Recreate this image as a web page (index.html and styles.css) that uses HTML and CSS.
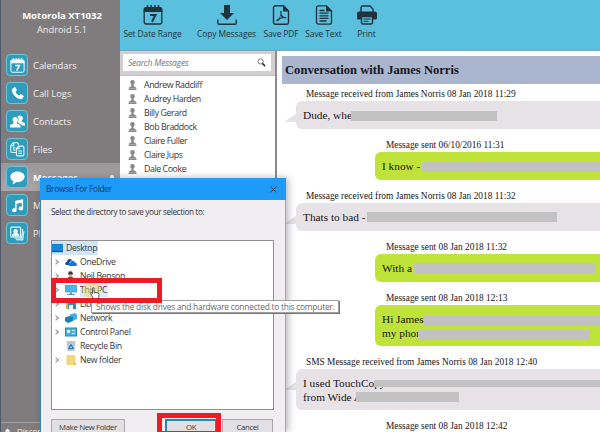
FILE: index.html
```html
<!DOCTYPE html>
<html lang="en">
<head>
<meta charset="utf-8">
<title>Messages</title>
<link rel="stylesheet" href="styles.css">
</head>
<body>
<svg width="0" height="0" class="defs">
  <symbol id="person" viewBox="0 0 10 11"><path d="M5 0C3 0 2.400 1.400 2.500 2.800c.1 1.200.6 2 1.400 2.500 0 1-.2 1.500-.7 1.800L1 8.200V9h8v-.8L6.800 7.100C6.300 6.800 6.100 6.300 6.100 5.300c.8-.5 1.300-1.300 1.400-2.500C7.600 1.400 7 0 5 0zM.6 9.500h8.800V11H.6z"/></symbol>
  <symbol id="cal" viewBox="0 0 20 20"><path d="M3 2h14a2.500 2.500 0 0 1 2.500 2.500V7H.5V4.500A2.500 2.500 0 0 1 3 2z"/><path d="M1.200 6v11a2 2 0 0 0 2 2h13.600a2 2 0 0 0 2-2V6" fill="none" stroke="currentColor" stroke-width="1.300"/><path d="M4.500 0v4M8.200 0v4M11.800 0v4M15.500 0v4" stroke="currentColor" stroke-width="1.500"/><path d="M7 10h5.500L9 16.800" fill="none" stroke="currentColor" stroke-width="2"/></symbol>
</svg>
<div class="app">
  <aside class="side">
    <div class="device"><b>Motorola XT1032</b><span>Android 5.1</span></div>
    <nav>
      <a class="item"><i class="tile"><svg viewBox="0 0 20 20"><use href="#cal"/></svg></i><span>Calendars</span></a>
      <a class="item"><i class="tile"><svg viewBox="0 0 20 20"><path d="M3.500 3.200 6 1.600c.6-.3 1-.2 1.300.3L9 5c.3.6.2 1-.3 1.400L7.200 7.600c.8 2 2.700 4 5 5.100l1.400-1.500c.4-.4.800-.5 1.300-.2l3 1.900c.5.3.6.8.3 1.300l-1.700 2.500c-.5.7-1.200.9-2.200.8C8.500 16.700 3 11 2.500 5.500c-.1-1 .2-1.800 1-2.300z"/></svg></i><span>Call Logs</span></a>
      <a class="item"><i class="tile"><svg viewBox="0 0 20 20"><path d="M13 2c-1.500 0-2.600.8-3 1.800 1.800 1.500 1.800 4.600.5 6.700v1.200l4.300 2c.6.3 1 .8 1.200 1.500H20v-2.500c0-1-4-1.700-4-2.700V8.800C18.500 6 17 2 13 2z"/><path d="M7 4C4 4 3 6.500 3.500 8.800c.2 1 .8 1.700 1.200 2v1.700L.8 14.300c-.6.3-.8.800-.8 1.500V18h14v-2.200c0-.7-.2-1.200-.8-1.500l-3.900-1.800v-1.700c.4-.3 1-1 1.200-2C11 6.500 10 4 7 4z"/></svg></i><span>Contacts</span></a>
      <a class="item"><i class="tile"><svg viewBox="0 0 20 20" class="line"><path d="M8 14H3a2 2 0 0 1-2-2V4.500L4.500 1H9.500A1.500 1.500 0 0 1 11 2.500V4M5 1v4H1M4 7.500h3M4 10.500h3"/><path d="M11.500 5.500h5.500A1.500 1.500 0 0 1 18.500 7v10a1.500 1.500 0 0 1-1.500 1.500h-7A1.500 1.500 0 0 1 8.500 17V8.500zM12 5.500V9H8.500M11 12h5M11 15h5"/></svg></i><span>Files</span></a>
      <a class="item on"><i class="tile"><svg viewBox="0 0 20 20"><path d="M10 2c5.200 0 9.500 3.100 9.500 7.100S15.200 16.200 10 16.200l-1.800-.1C7 17.600 4.800 18.800 3 18.900c1-.9 1.500-2.200 1.500-3.800C2.100 13.800.5 11.600.5 9.100.5 5.100 4.800 2 10 2z"/></svg></i><b>Messages</b><em></em></a>
      <a class="item"><i class="tile"><svg viewBox="0 0 20 20"><path d="M7 3.500 17.500 1.500V14a3 2.500 0 1 1-1.800-2.200V6.300L8.800 7.600v8.600a3 2.500 0 1 1-1.800-2.200z"/></svg></i><span>Music</span></a>
      <a class="item"><i class="tile"><svg viewBox="0 0 20 20" class="line"><rect x="1" y="1.500" width="13" height="13" rx="1"/><path d="M15.500 4.500l1.500.4-1.800 11.300-9.500-.2M18.500 7l-1.600 11.500-9-.3"/><path d="M3.500 12.500c.5-2 2-2 2.700-2.700-1.700-1.800-1.200-5 1.300-5s3 3.200 1.300 5c.7.700 2.200.7 2.700 2.700z" class="solid"/></svg></i><span>Photos</span></a>
    </nav>
    <footer><svg viewBox="0 0 8 8"><path d="M4 0l1 .8C6.500 1.600 6.500 3 6.600 5L8 7H0l1.400-2C1.500 3 1.500 1.600 3 .8z"/></svg><span>Disconnect</span></footer>
  </aside>
  <main>
    <header class="bar">
      <a class="tool t1"><svg viewBox="0 0 20 20"><use href="#cal"/></svg><span>Set Date Range</span></a>
      <a class="tool t2"><svg viewBox="0 0 20 20"><path d="M7 0h6v8h4l-7 7-7-7h4z"/><path d="M.8 14.500V18q0 1.200 1.200 1.200h16q1.200 0 1.200-1.200v-3.500" fill="none" stroke="currentColor" stroke-width="1.400"/></svg><span>Copy Messages</span></a>
      <a class="tool t3"><svg viewBox="0 0 20 20"><path d="M4.500.8h8L17.500 6v11.200a2 2 0 0 1-2 2h-11a2 2 0 0 1-2-2V2.800a2 2 0 0 1 2-2z" fill="none" stroke="currentColor" stroke-width="1.400"/><path d="M12 .5 18 6.500h-6zM9.200 6h1.300l.1 3.200c.7 1.400 1.500 2.200 2.500 2.800l2.200.2v1.200l-2.600-.3-3.200.6-2.800 2.600-1.400-.2.200-1.200 2.700-1.800 1.300-3.400zM9.700 10.700l-.8 2 2.200-.4z" fill-rule="evenodd"/></svg><span>Save PDF</span></a>
      <a class="tool t4"><svg viewBox="0 0 20 20"><path d="M4.500.8h8L17.500 6v11.200a2 2 0 0 1-2 2h-11a2 2 0 0 1-2-2V2.800a2 2 0 0 1 2-2zM5.500 5.500h5M5.500 8.200h9M5.500 10.800h9M5.500 13.400h9M5.500 16h7" fill="none" stroke="currentColor" stroke-width="1.300"/><path d="M12 .5 18 6.500h-6z"/></svg><span>Save Text</span></a>
      <a class="tool t5"><svg viewBox="0 0 20 20"><path d="M4 7V2.500A1.500 1.500 0 0 1 5.500 1H13l3 3v3M4.500 11.500h11v6a1.500 1.500 0 0 1-1.500 1.500H6a1.500 1.500 0 0 1-1.500-1.500z" fill="none" stroke="currentColor" stroke-width="1.400"/><path d="M2 6.500h16a2 2 0 0 1 2 2V13a1.500 1.500 0 0 1-1.500 1.500H16V11H4v3.500H1.500A1.500 1.500 0 0 1 0 13V8.500a2 2 0 0 1 2-2z"/><path d="M6.500 14h7M6.500 16.300h5" stroke="currentColor"/></svg><span>Print</span></a>
    </header>
    <div class="cols">
      <section class="people">
        <div class="search"><div><span>Search Messages</span><svg viewBox="0 0 10 10"><circle cx="4" cy="3.800" r="2.900" fill="none" stroke="#6b666b"/><path d="M6 6l3 3" stroke="#333" stroke-width="1.700"/></svg></div></div>
        <ul>
          <li><svg><use href="#person"/></svg>Andrew Radcliff</li>
          <li><svg><use href="#person"/></svg>Audrey Harden</li>
          <li><svg><use href="#person"/></svg>Billy Gerard</li>
          <li><svg><use href="#person"/></svg>Bob Braddock</li>
          <li><svg><use href="#person"/></svg>Claire Fuller</li>
          <li><svg><use href="#person"/></svg>Claire Jups</li>
          <li><svg><use href="#person"/></svg>Dale Cooke</li>
        </ul>
      </section>
      <section class="chat">
        <h1>Conversation with James Norris</h1>
        <div class="msg in"><p class="meta">Message received from James Norris 08 Jan 2018 11:29</p><div class="bubble"><p>Dude, whe<i class="mask m1"></i></p></div></div>
        <div class="msg out"><p class="meta">Message sent 06/10/2016 11:31</p><div class="bubble"><p>I know - <i class="mask m2"></i></p></div></div>
        <div class="msg in"><p class="meta">Message received from James Norris 08 Jan 2018 11:32</p><div class="bubble"><p>Thats to bad - <i class="mask m3"></i></p></div></div>
        <div class="msg out"><p class="meta">Message sent 08 Jan 2018 11:32</p><div class="bubble"><p>With a<i class="mask m4"></i></p></div></div>
        <div class="msg out"><p class="meta">Message sent 08 Jan 2018 12:13</p><div class="bubble"><p>Hi James<i class="mask m5"></i></p><p>my phon<i class="mask m6"></i></p></div></div>
        <div class="msg in"><p class="meta sms">SMS Message received from James Norris 08 Jan 2018 12:40</p><div class="bubble"><p>I used TouchCopy<i class="mask m7"></i></p><p>from Wide A<i class="mask m8"></i></p></div></div>
        <div class="msg out"><p class="meta">Message sent 08 Jan 2018 12:42</p></div>
      </section>
    </div>
  </main>
</div>

<div class="dialog">
  <div class="title"><span>Browse For Folder</span><svg viewBox="0 0 8 8"><path d="M.7.700l6.600 6.600M7.300.7.700 7.300" stroke="#17385c" stroke-width="1.100"/></svg></div>
  <p class="hint">Select the directory to save your selection to:</p>
  <div class="tree">
    <div class="row root"><svg viewBox="0 0 12 10"><path d="M0 .5h12v9H0z" fill="#1687d9"/><path d="M0 8h12v1.500H0z" fill="#0b5fae"/></svg><span>Desktop</span></div>
    <div class="row"><u></u><svg viewBox="0 0 12 10"><path d="M1 8C-.5 7 .5 4.800 2 4.800 2 2 5.500 1 7 3L4 6v2z" fill="#0b4fa4"/><path d="M4.500 9C2.500 8 3.500 5.500 5.300 5.700 6 3 9.500 3 9.800 5.500 12.500 5.500 12.500 9 10.500 9z" fill="#1479cf"/></svg><span>OneDrive</span></div>
    <div class="row"><u></u><svg viewBox="0 0 12 10"><circle cx="5.500" cy="2.500" r="2.300" fill="#41342e"/><path d="M2 10c0-3 1-4.500 3.500-4.500S9 7 9 10z" fill="#4a5058"/><path d="M4.300 3.200h2.500v2H4.300z" fill="#caa48a"/></svg><span>Neil Benson</span></div>
    <div class="row pc"><u></u><svg viewBox="0 0 12 10"><path d="M0 0h12v7.500H0z" fill="#6b9dba"/><path d="M.8.800h10.400v6H.8z" fill="#46b8ef"/><path d="M2 9h8v1H2zM5 7.500h2V9H5z" fill="#5a93b0"/></svg><span>This PC</span></div>
    <div class="row"><u></u><svg viewBox="0 0 12 10"><path d="M1 4 6 0l5 4v6H8V6H4v4H1z" fill="#2c8abf"/><path d="M1 4h2v6H1z" fill="#e0b84c"/></svg><span>Libraries</span></div>
    <div class="row"><u></u><svg viewBox="0 0 12 10"><path d="M5 1.500 10 0l2 1.500V6l-5 2-2-1z" fill="#42aee6"/><path d="M0 4.500 4.500 3 8 4v4l-5 2-3-2z" fill="#1f7fb5"/></svg><span>Network</span></div>
    <div class="row"><u></u><svg viewBox="0 0 12 10"><path d="M0 .5h12v9H0z" fill="#2a83b6"/><path d="M1 1.500h10v7H1z" fill="#48b3e3"/><path d="M2 3h3v3H2zM7 3h3v1H7zM7 6h3v1H7z" fill="#d7f0fb"/></svg><span>Control Panel</span></div>
    <div class="row"><u class="none"></u><svg viewBox="0 0 12 10"><path d="M1.500 0h9l-1 10h-7z" fill="#b9c6cf"/><path d="M6 2.500 9 8H3z" fill="#2673ae"/><path d="M6 5l1 2H5z" fill="#e6eef2"/></svg><span>Recycle Bin</span></div>
    <div class="row"><u></u><svg viewBox="0 0 12 10"><path d="M1.500 0h7l2 1v9h-9z" fill="#f4d77a"/><path d="M9 8h2v2H9z" fill="#e4bd52"/></svg><span>New folder</span></div>
  </div>
  <div class="buttons"><button class="mk">Make New Folder</button><button class="ok">OK</button><button class="cancel">Cancel</button></div>
</div>
<div class="tip">Shows the disk drives and hardware connected to this computer.</div>
<div class="glow"></div>
<svg class="hand" viewBox="0 0 11 13"><path d="M3 9 1.500 6.500c-.6-1 .5-1.500 1.100-.8L3.500 7V1.500c0-1.200 1.500-1.200 1.500 0v3.700l4 .8c.8.2 1 .8 1 1.500L9.500 12h-5z" fill="#fff" stroke="#4c4a50" stroke-width=".9"/></svg>
<div class="mark mark-pc"></div>
<div class="mark mark-ok"></div>
</body>
</html>
```
FILE: styles.css
```css
* { box-sizing: border-box; }
body { margin: 0; width: 600px; height: 432px; overflow: hidden; position: relative; background: #fff; font: 9.500px/14px "Open Sans", "Noto Sans", sans-serif; color: #39363a; }
p, ul, h1 { margin: 0; padding: 0; font-weight: 400; }
.defs { position: absolute; }
svg { display: block; fill: currentColor; flex: none; }
span { white-space: nowrap; }
.app { display: flex; height: 432px; }

.side { width: 120px; background: #807b7c; border-left: 1px solid #50596b; color: #f1eeee; display: flex; flex-direction: column; flex: none; }
.device { height: 51px; padding-top: 9px; text-align: center; display: flex; flex-direction: column; padding-left: 3px; }
.device b { font-size: 9.600px; letter-spacing: -.05px; color: #fff; }
.device span { font-size: 9.300px; }
.item { display: flex; align-items: center; height: 28px; padding-left: 5px; gap: 5px; font-size: 9.400px; }
.item span, .item b { padding-top: 1px; }
.item.on { background: linear-gradient(#9c9899, #aaa6a7); color: #fff; }
.item em { width: 4px; height: 4px; border-radius: 50%; background: #fff; margin-left: auto; margin-right: 6px; }
.tile { width: 22px; height: 22px; border-radius: 4px; border: 1px solid #71c4d8; background: #2e9dbd; display: flex; align-items: center; justify-content: center; color: #fff; }
.tile svg { width: 15px; height: 15px; }
.line { fill: none; stroke: #e5f7fb; stroke-width: 1.400; }
.line .solid { fill: #e5f7fb; }
.side footer { margin-top: auto; height: 10px; border-top: 1px solid #a5a1a2; display: flex; padding-left: 3px; font-size: 8px; line-height: 16px; overflow: hidden; }
.side footer svg { width: 7px; height: 8px; margin-top: 5px; margin-right: 6px; }

main { flex: 1; display: flex; flex-direction: column; min-width: 0; }
.bar { height: 51px; background: #5bbfde; border-bottom: 1px solid #74a9bc; display: flex; color: #20333d; flex: none; }
.tool { display: flex; flex-direction: column; align-items: center; padding-top: 5px; font-size: 8.400px; letter-spacing: -.08px; flex: none; }
.tool svg { width: 20px; height: 20px; margin-bottom: 2px; }
.t1 { width: 65px; } .t2 { width: 83px; } .t3 { width: 26px; } .t4 { width: 59px; } .t5 { width: 27px; }

.cols { flex: 1; display: flex; min-height: 0; }
.people { width: 157px; border-right: 2px solid #8d898d; background: #fff; flex: none; }
.search { height: 25px; background: #d3ced2; padding: 3px 4px 5px 3px; border-bottom: 1px solid #c1bcc1; }
.search div { height: 17px; background: #fff; display: flex; align-items: center; justify-content: space-between; padding: 0 5px; font-style: italic; font-size: 8.600px; letter-spacing: -.25px; color: #777278; }
.search svg { width: 9px; height: 9px; }
ul { list-style: none; padding: 2px 0 0 8px; }
li { display: flex; align-items: center; height: 14px; gap: 7px; font-size: 8.800px; letter-spacing: -.42px; }
li svg { width: 9px; height: 10px; color: #8b888c; }

.chat { flex: 1; min-width: 0; padding: 5px 0 0 5px; overflow: hidden; font-family: "Liberation Serif", serif; color: #17151a; }
.chat h1 { height: 28px; background: #a9b6cd; font-size: 12.600px; line-height: 28px; font-weight: 700; padding-left: 3px; margin-bottom: 3px; }
.msg { margin-bottom: 9px; }
.meta { height: 14px; line-height: 15px; font-size: 9.370px; white-space: nowrap; }
.in .meta { padding-left: 24px; }
.out .meta { padding-left: 104px; }
.bubble { min-height: 28px; padding: 7px 0 7px 7px; border-radius: 6px 0 0 6px; font-size: 11.300px; line-height: 14px; position: relative; white-space: nowrap; }
.bubble p { display: flex; height: 13.500px; position: relative; white-space: pre; }
.in .bubble { background: #e7e2e6; margin-left: 14px; }
.out .bubble { background: #bfe339; margin-left: 93px; }
.in .bubble::before { content: ""; position: absolute; left: -12px; top: 12px; border-left: 13px solid transparent; border-bottom: 9px solid #e7e2e6; }
.mask { position: absolute; background: #c2c2c2; height: 10px; top: 3px; }
.m1 { left: 48px; width: 146px; } .m2 { left: 40px; width: 180px; } .m3 { left: 64px; width: 190px; top: 2px; } .m4 { left: 32px; width: 182px; top: 2px; }
.m5 { left: 42px; width: 180px; top: 4px; } .m6 { left: 36px; width: 172px; top: 4px; } .m7 { left: 71px; width: 240px; top: 4px; height: 7px; } .m8 { left: 53px; width: 103px; top: 2.500px; }

.dialog { position: absolute; left: 40px; top: 178px; width: 246px; height: 254px; background: #f0eef0; border-left: 1px solid #3d7dab; border-right: 1px solid #6fb6e4; box-shadow: 2px 0 7px rgba(40,40,60,.35); }
.title { height: 22px; margin: 0 -1px; background: #1e9bf8; display: flex; align-items: center; justify-content: space-between; padding: 0 9px 0 6px; color: #14375c; font-size: 8.400px; letter-spacing: -.3px; }
.title svg { width: 7px; height: 7px; }
.hint { height: 40px; padding: 5px 0 0 10px; font-size: 8.200px; letter-spacing: -.37px; white-space: nowrap; }
.tree { margin: 0 11px 0 10px; height: 170px; border: 1px solid #918f93; background: #fff; }
.row { display: flex; align-items: center; height: 14px; font-size: 8.700px; letter-spacing: -.33px; }
.row svg { width: 12px; height: 10px; margin-right: 3px; }
.row u { width: 4px; height: 4px; border: solid #8b898d; border-width: 1px 1px 0 0; transform: rotate(45deg); margin: 0 7px 0 2px; }
.row u.none { visibility: hidden; }
.root { width: 46px; background: #d0e5f6; }
.root svg { width: 11px; }
.pc span { background: #dcebf7; padding-right: 1px; }
.buttons { display: flex; padding: 9px 11px 0 10px; }
button { height: 16px; padding: 0; border: 1px solid #aaa7aa; background: #e2e0e2; font: 7.800px/12px "Open Sans", sans-serif; letter-spacing: -.35px; color: #39363a; white-space: nowrap; }
.mk { width: 74px; margin-right: 40px; }
.ok { width: 52px; border: 2px solid #2586b8; margin-right: 5px; line-height: 10px; }
.cancel { width: 51px; }

.tip { position: absolute; left: 91px; top: 300px; width: 248px; height: 13px; background: #fff; border: 1px solid #a19fa2; box-shadow: 1px 1px 0 #77757a; font-size: 8.400px; letter-spacing: -.23px; line-height: 12px; padding-left: 4px; white-space: nowrap; color: #6a686c; }
.glow { position: absolute; left: 82px; top: 282px; width: 19px; height: 16px; border-radius: 50%; background: rgba(238,224,95,.5); }
.hand { position: absolute; left: 89px; top: 287px; width: 11px; height: 13px; }
.mark { position: absolute; border: 5px solid #ed1c24; }
.mark-pc { left: 51px; top: 278px; width: 111px; height: 25px; }
.mark-ok { left: 157px; top: 413px; width: 64px; height: 19px; border-bottom-width: 1px; }
```
